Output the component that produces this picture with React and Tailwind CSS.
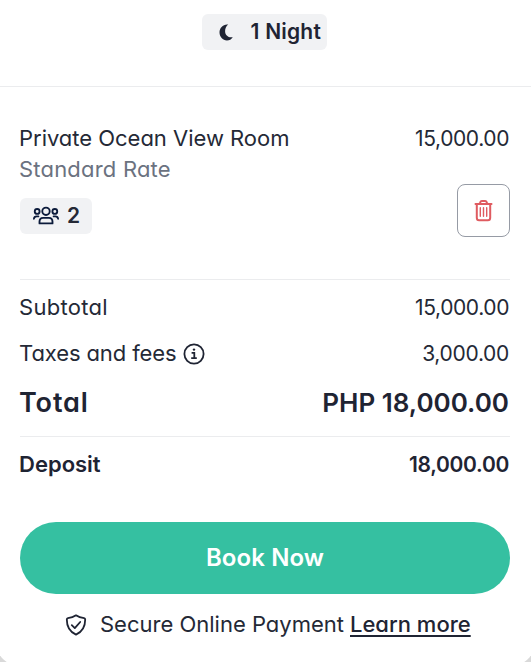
import React from 'react';

function Row({ label, value, className }) {
  return (
    <div className={`flex items-center justify-between whitespace-nowrap ${className}`}>
      {label}
      {value}
    </div>
  );
}

function MoonIcon() {
  return (
    <svg width="14" height="17" viewBox="0 0 14 17" fill="#1f2433">
      <path d="M9.2.5C4.2-.2.5 3.8.5 8.3c0 4.6 3.3 8.2 7.4 8.2 2.5 0 4.6-1.3 5.9-3.3-4.600.7-7.700-2.100-7.700-6C6.100 4.500 7.200 2 9.200.5z" />
    </svg>
  );
}

function PeopleIcon() {
  return (
    <svg className="mb-0.5" width="26" height="19" viewBox="0 0 28 20" fill="none" stroke="#0b1a3a" strokeWidth="2" strokeLinecap="round" strokeLinejoin="round">
      <circle cx="14" cy="5.500" r="4" />
      <circle cx="4.500" cy="5.600" r="2.600" />
      <circle cx="23.500" cy="5.600" r="2.600" />
      <path d="M7 18.500v-1.800c0-2.500 1.500-4.200 3.800-4.200h6.400c2.300 0 3.800 1.700 3.800 4.200v1.800z" />
      <path d="M1 13.500c.2-1.700 1.300-2.500 3-2.500h1.800M27 13.500c-.2-1.700-1.300-2.500-3-2.500h-1.800" />
    </svg>
  );
}

function TrashIcon() {
  return (
    <svg width="20" height="23" viewBox="0 0 20 23" fill="none" stroke="#df5b60" strokeLinecap="round" strokeLinejoin="round">
      <path strokeWidth="2" d="M1.500 5h16M2.800 5v13.800c0 1.500.8 2.500 2.300 2.500h8.800c1.500 0 2.300-1 2.300-2.500V5M5.700 4.500l.5-1.200c.3-.8.9-1.300 1.700-1.300h3.200c.8 0 1.400.5 1.700 1.300l.5 1.200" />
      <path strokeWidth="1.400" d="M6.300 8.700v8.600M9.500 8.700v8.600M12.700 8.700v8.600" />
    </svg>
  );
}

function InfoIcon() {
  return (
    <svg width="22" height="22" viewBox="0 0 22 22" fill="none" stroke="#1f2433" strokeWidth="1.800">
      <circle cx="11" cy="11" r="9.600" />
      <path d="M8.600 9.800h2.700v5M8.200 15.100h5.600" />
      <circle cx="11" cy="6.600" r="1.200" fill="#1f2433" stroke="none" />
    </svg>
  );
}

function ShieldIcon() {
  return (
    <svg width="22" height="22" viewBox="0 0 22 22" fill="none" stroke="#1f2433" strokeWidth="1.800" strokeLinecap="round" strokeLinejoin="round">
      <path d="M11 1.300c2.500 1.700 5.200 2.500 8.100 2.900.8.100 1.100.5 1.100 1.300 0 7-3 12.400-9.200 15.100-6.200-2.700-9.200-8.100-9.200-15.100 0-.8.300-1.200 1.100-1.300 2.900-.4 5.600-1.200 8.100-2.900z" />
      <path d="M6.800 11.200l3 2.900 5.400-6.100" />
    </svg>
  );
}

export default function App() {
  return (
    <div className="h-[662px] w-[531px] overflow-hidden bg-[#d9d9d9] font-['Inter',sans-serif] text-[21px] leading-[32px] text-[#242936] [font-feature-settings:'cv11']">
      <main className="-mx-1 flex h-[666px] flex-col rounded-b-[24px] bg-white px-1">
        <header className="-mx-1 flex h-[87px] shrink-0 justify-center border-b border-[#ebecee] pt-[14px] pr-[2px]">
          <div className="flex h-9 w-[125px] items-center justify-between rounded-md bg-[#f1f2f4] pr-[6px] pl-[17px] font-semibold text-[#1f2433]">
            <MoonIcon />
            <span className="tracking-[0.2px]">1 Night</span>
          </div>
        </header>

        <section className="mr-[21px] ml-5 flex h-[193px] shrink-0 flex-col border-b border-[#ebecee] pt-9">
          <Row
            className="h-8 pr-px"
            label={<span className="-ml-px pb-0.5 text-[22px] tracking-[-0.02px]">Private Ocean View Room</span>}
            value={<span className="tracking-[-0.4px]">15,000.00</span>}
          />
          <div className="-ml-px h-[29px] text-[22px] leading-[28px] tracking-[0.2px] text-[#6b7280]">Standard Rate</div>
          <div className="flex justify-between">
            <div className="mt-[14px] flex h-9 w-[72px] items-center gap-2 rounded-md bg-[#f1f2f4] pl-[13px] font-semibold">
              <PeopleIcon />
              <span>2</span>
            </div>
            <button aria-label="Remove room" className="flex h-[53px] w-[53px] items-center justify-center rounded-lg border border-[#969ba5]">
              <TrashIcon />
            </button>
          </div>
        </section>

        <section className="mr-[21px] ml-5 h-[157px] shrink-0 border-b border-[#ebecee] pt-3">
          <Row
            className="h-8 pr-px"
            label={<span className="-ml-px pb-0.5 text-[22px] tracking-[0.3px]">Subtotal</span>}
            value={<span className="tracking-[-0.4px]">15,000.00</span>}
          />
          <Row
            className="mt-[14px] h-8 pr-px"
            label={
              <span className="flex items-center gap-[7px]">
                <span className="-ml-px w-[157px] pb-0.5 text-[22px] tracking-[-0.1px]">Taxes and fees</span>
                <InfoIcon />
              </span>
            }
            value={<span className="tracking-[-0.3px]">3,000.00</span>}
          />
          <Row
            className="mt-[13px] h-10 pr-px text-[26px] font-semibold text-[#1f2433]"
            label={<span className="-ml-px text-[27px] tracking-[0.9px]">Total</span>}
            value={<span>PHP 18,000.00</span>}
          />
        </section>

        <Row
          className="mt-3 mr-[21px] ml-5 h-8 shrink-0 pr-px font-semibold text-[#1f2433]"
          label={<span className="-ml-px pb-0.5 text-[22px]">Deposit</span>}
          value={<span className="tracking-[-0.3px]">18,000.00</span>}
        />

        <button className="mt-[41px] mr-[21px] ml-5 h-[72px] shrink-0 rounded-full bg-[#35c0a1] text-[24px] font-semibold tracking-[0.1px] text-white">
          Book Now
        </button>

        <div className="flex h-[61px] shrink-0 items-center whitespace-nowrap pl-[65px]">
          <ShieldIcon />
          <span className="ml-[13px] w-[245px] pb-0.5 text-[22px]">Secure Online Payment</span>
          <a className="ml-[5px] pb-0.5 text-[22px] font-medium text-[#1f2433] underline decoration-2 underline-offset-[3px]">Learn more</a>
        </div>
      </main>
    </div>
  );
}
